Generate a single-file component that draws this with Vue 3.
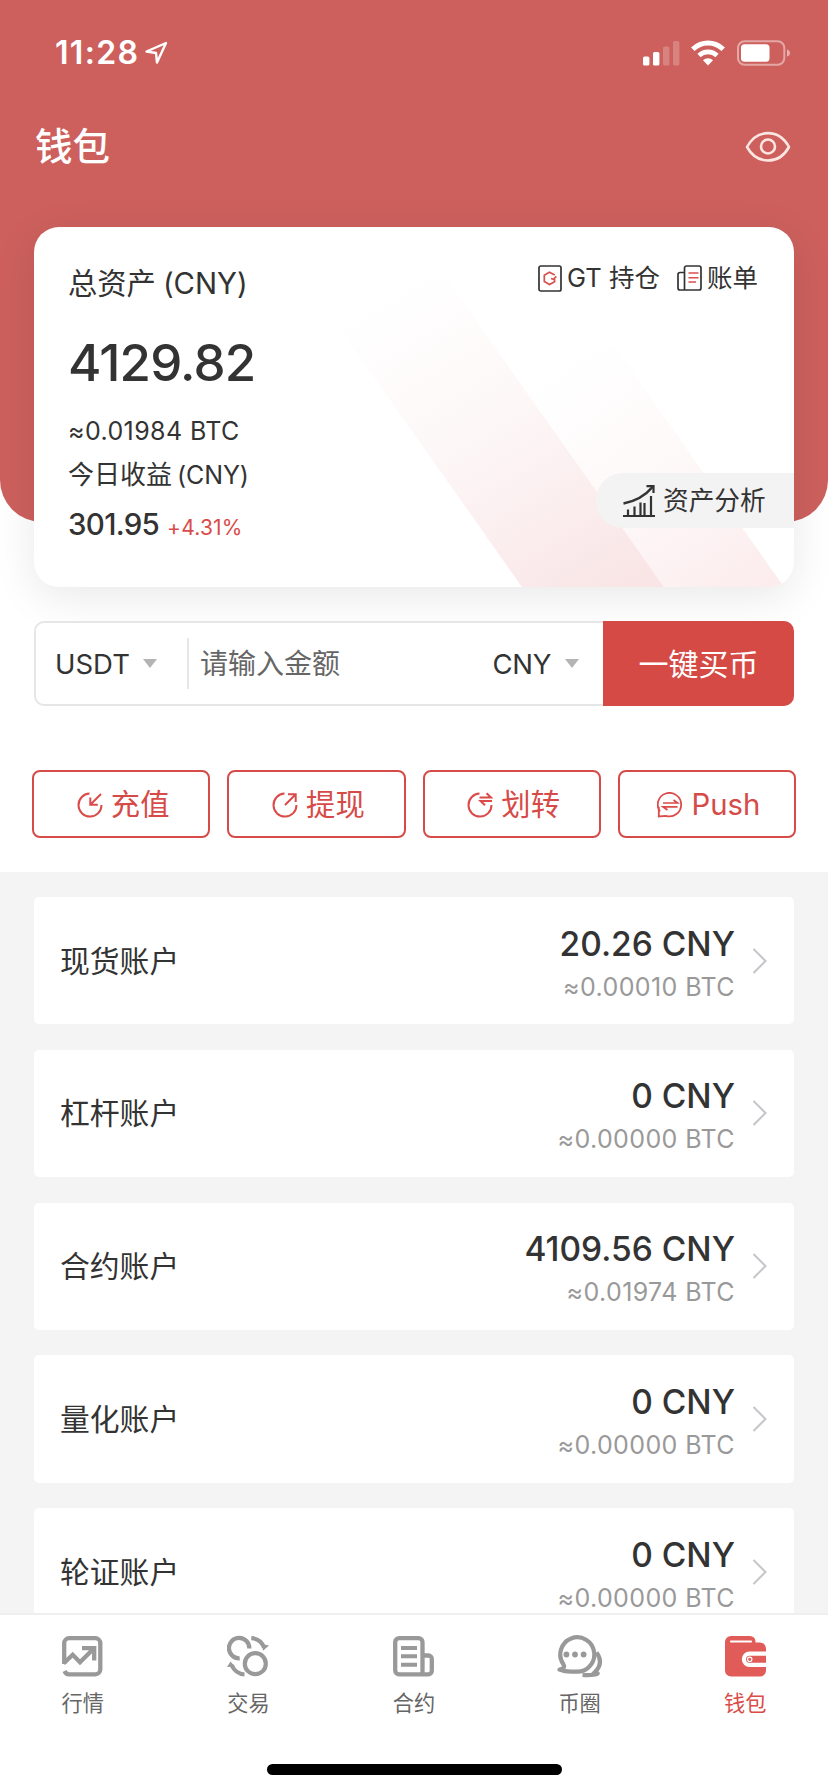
<script setup>
const actions = [
  { id: 'deposit', label: '充值' },
  { id: 'withdraw', label: '提现' },
  { id: 'transfer', label: '划转' },
  { id: 'push', label: 'Push' },
]

const accounts = [
  { name: '现货账户', cny: '20.26', btc: '0.00010' },
  { name: '杠杆账户', cny: '0', btc: '0.00000' },
  { name: '合约账户', cny: '4109.56', btc: '0.01974' },
  { name: '量化账户', cny: '0', btc: '0.00000' },
  { name: '轮证账户', cny: '0', btc: '0.00000' },
]

const tabs = [
  { id: 'market', label: '行情' },
  { id: 'trade', label: '交易' },
  { id: 'contract', label: '合约' },
  { id: 'circle', label: '币圈' },
  { id: 'wallet', label: '钱包', active: true },
]
</script>

<template>
  <div class="screen">
    <header class="hero">
      <div class="status">
        <div class="clock">
          <span class="time">11:28</span>
          <svg class="locate" width="25" height="25" viewBox="0 0 25 25" fill="none" stroke="#fff" stroke-width="2.4" stroke-linejoin="round">
            <path d="M22 3 2.500 11.500 12 13 13 22.500Z" />
          </svg>
        </div>
        <div class="indicators">
          <svg width="37" height="26" viewBox="0 0 37 26" fill="#fff">
            <rect x="0" y="16.500" width="6.400" height="9" rx="1.600" />
            <rect x="10" y="12" width="6.400" height="13.500" rx="1.600" />
            <rect x="20" y="6.500" width="6.400" height="19" rx="1.600" opacity=".22" />
            <rect x="30" y="1" width="6.400" height="24.500" rx="1.600" opacity=".22" />
          </svg>
          <svg class="wifi" width="34" height="26" viewBox="0 0 34 26" fill="none" stroke="#fff">
            <path d="M1.800 9.300A21.500 21.500 0 0 1 32.200 9.300" stroke-width="5" />
            <path d="M8 15.500A13 13 0 0 1 26 15.500" stroke-width="4.600" />
            <path d="M12 20.200a7.200 7.200 0 0 1 10 0L17 25.500Z" fill="#fff" stroke="none" />
          </svg>
          <svg class="battery" width="54" height="26" viewBox="0 0 54 26">
            <rect x="1" y="1.300" width="46.300" height="23.400" rx="6.500" fill="none" stroke="#fff" stroke-opacity=".45" stroke-width="2" />
            <rect x="4" y="4.300" width="28.500" height="17.400" rx="3.500" fill="#fff" />
            <path d="M50 9.500c4 1 4 6 0 7Z" fill="#fff" opacity=".5" />
          </svg>
        </div>
      </div>
      <div class="titlebar">
        <h1>钱包</h1>
        <svg width="46" height="32" viewBox="0 0 46 32" fill="none" stroke="#fbe6e2" stroke-width="2.600">
          <path d="M2 16C12-2.500 34-2.500 44 16C34 34 12 34 2 16Z" stroke-linejoin="round" />
          <circle cx="23" cy="15.500" r="7" />
        </svg>
      </div>
    </header>

    <section class="asset">
      <svg class="ribbons" width="760" height="360" viewBox="0 0 760 360">
        <defs>
          <linearGradient id="ribbonMain" gradientUnits="userSpaceOnUse" x1="370" y1="60" x2="560" y2="375">
            <stop offset="0" stop-color="#f9e5e6" stop-opacity="0" />
            <stop offset=".45" stop-color="#f9e5e6" stop-opacity=".32" />
            <stop offset="1" stop-color="#f9e5e6" />
          </linearGradient>
          <linearGradient id="ribbonSide" gradientUnits="userSpaceOnUse" x1="540" y1="130" x2="710" y2="375">
            <stop offset="0" stop-color="#fceced" stop-opacity="0" />
            <stop offset=".5" stop-color="#fceced" stop-opacity=".35" />
            <stop offset="1" stop-color="#fceced" />
          </linearGradient>
        </defs>
        <path d="M488 360 234 0H376L630 360Z" fill="url(#ribbonMain)" />
        <path d="M630 360 461 120H581L750 360Z" fill="url(#ribbonSide)" />
      </svg>
      <div class="summary">
        <p class="label">总资产<span class="unit">(CNY)</span></p>
        <p class="total">4129.82</p>
        <p class="btc">≈0.01984 BTC</p>
        <p class="today">今日收益<span class="unit">(CNY)</span></p>
        <p class="gain"><span class="gain-value">301.95</span><span class="gain-rate">+4.31%</span></p>
      </div>
      <nav class="links">
        <a class="link">
          <svg width="24" height="27" viewBox="0 0 24 27" fill="none">
            <rect x="1" y="1" width="22" height="25" rx="1.800" stroke="#333" stroke-width="1.700" />
            <path d="M16.800 10 11.400 7.300 6.300 10.200v6.300l5.100 3 5.200-2.800v-2.500M13 13.500l2.500 .8 2.800-3" stroke="#d9504d" stroke-width="1.700" />
          </svg>
          <span class="gt">GT 持仓</span>
        </a>
        <a class="link">
          <svg width="25" height="26" viewBox="0 0 25 26" fill="none">
            <path d="M7.500 25V3a2 2 0 0 1 2-2H22a2 2 0 0 1 2 2V23a2 2 0 0 1-2 2H3a2 2 0 0 1-2-2V9.500a2 2 0 0 1 2-2H7.500" stroke="#333" stroke-width="1.700" />
            <path d="M11.500 8h10M11.500 12.700h10M11.500 17h7.500" stroke="#d9504d" stroke-width="1.600" />
          </svg>
          <span class="bill">账单</span>
        </a>
      </nav>
      <a class="analysis">
        <svg width="34" height="34" viewBox="0 0 34 34" fill="none" stroke="#333" stroke-width="2.200">
          <path d="M1 32H33M6 31.500V25.500M12.500 31.500V22.500M18.500 31.500V18.500M22.500 31.500V19M29 31.500V12" />
          <path d="M1.500 19.500C14 17 23 12 30.500 3" stroke-width="2.600" />
          <path d="M24.500 2.200h7V9" />
        </svg>
        <span>资产分析</span>
      </a>
    </section>

    <section class="buy">
      <div class="coin"><span>USDT</span><i class="caret"></i></div>
      <div class="amount">请输入金额</div>
      <div class="fiat"><span>CNY</span><i class="caret"></i></div>
      <button class="submit">一键买币</button>
    </section>

    <section class="actions">
      <button v-for="a in actions" :key="a.id" class="action" :class="a.id">
        <svg width="26" height="26" viewBox="0 0 26 26" fill="none" stroke="#da4b49" stroke-width="2">
          <template v-if="a.id === 'deposit'">
            <path d="M12.500 1.600A11.500 11.500 0 1 0 24.500 13" />
            <path d="M24 2 13.500 12.500M13.300 5.500v7.300h7.500" />
          </template>
          <template v-else-if="a.id === 'withdraw'">
            <path d="M12.500 1.600A11.500 11.500 0 1 0 24.500 13" />
            <path d="M13 13 23.500 2.500M16 2.300h7.700V10" />
          </template>
          <template v-else-if="a.id === 'transfer'">
            <path d="M12.500 1.600A11.500 11.500 0 1 0 24.500 13" />
            <path d="M12.500 5.500H24L19.500 1.200M25 9H13.500L18 13.300" />
          </template>
          <template v-else>
            <path d="M3 19.500A11.700 11.700 0 1 1 9 23.800L1.800 24.500V15" stroke-width="1.800" />
            <path d="M6 11H20.500L16.500 8M20.500 14.800H6L10.500 18" stroke-width="1.700" />
          </template>
        </svg>
        <span>{{ a.label }}</span>
      </button>
    </section>

    <main class="accounts">
      <article v-for="acc in accounts" :key="acc.name" class="account">
        <span class="name">{{ acc.name }}</span>
        <div class="balance">
          <span class="cny">{{ acc.cny }} CNY</span>
          <span class="sub">≈{{ acc.btc }} BTC</span>
        </div>
        <svg width="16" height="26" viewBox="0 0 16 26" fill="none" stroke="#c6c6ca" stroke-width="2">
          <path d="M1.500 1 13.500 13 1.500 25" />
        </svg>
      </article>
    </main>

    <footer class="tabbar">
      <div class="tabs">
        <a v-for="t in tabs" :key="t.id" class="tab" :class="{ active: t.active }">
          <svg v-if="t.id === 'market'" width="41" height="43" viewBox="0 -1 41 43" fill="none" stroke="#999" stroke-width="4.300">
            <path d="M2.200 28V7.200a5 5 0 0 1 5-5H33.300a5 5 0 0 1 5 5V33.300a5 5 0 0 1-5 5H7Q4 38.300 2.500 35" />
            <path d="M1.500 27.500 10.700 18.800 18 26.200 32 12.200M20 12.200H32.200V24.500" />
          </svg>
          <svg v-else-if="t.id === 'trade'" width="42" height="43" viewBox="0 -1 42 43" fill="none" stroke="#999" stroke-width="4.200">
            <circle cx="28.300" cy="27.700" r="10.500" />
            <path d="M22.300 12.500A10.200 10.200 0 1 0 12.700 22.300" />
            <path d="M24.300 2.200C31 2.500 35 6 37 11.500M17.500 38.500C11 38 7 34.500 4.500 29" />
            <path d="M42 9.500 36 14.800 35 8ZM0 31 3.500 25.500 8 30.500Z" fill="#999" stroke="none" />
          </svg>
          <svg v-else-if="t.id === 'contract'" width="41" height="43" viewBox="0 -1 41 43" fill="none" stroke="#999" stroke-width="4.300">
            <path d="M29.500 38.300H6.200a4 4 0 0 1-4-4V6.200a4 4 0 0 1 4-4H25.500a4 4 0 0 1 4 4ZM29.500 19.500H35.500a3.300 3.300 0 0 1 3.300 3.300V35a3.300 3.300 0 0 1-3.300 3.300H29.500" />
            <path d="M8 12H24M8 20.300H24M8 28.700H24" stroke-width="4" />
          </svg>
          <svg v-else-if="t.id === 'circle'" width="48" height="43" viewBox="0 0 48 43" fill="none" stroke="#999" stroke-width="4.200">
            <path d="M3.500 34.500C7.500 34 9 32 7.500 29.500A17 17.200 0 1 1 19 36.500C13 37 8 36.500 3.500 34.500Z" stroke-linejoin="round" />
            <path d="M40.500 17.500C46 25 45 31 39 37C42 38 43 38.500 39 39.500Q34 40.500 26.500 40" />
            <g fill="#999" stroke="none"><circle cx="10.400" cy="19.500" r="2.900" /><circle cx="19" cy="19.500" r="2.900" /><circle cx="27.600" cy="19.500" r="2.900" /></g>
          </svg>
          <svg v-else width="41" height="43" viewBox="0 -1 41 43" fill="none">
            <path d="M6 0H25a5.500 5.500 0 0 1 5.500 5.500V6.500H35a6 6 0 0 1 6 6V34.500a6 6 0 0 1-6 6H6a6 6 0 0 1-6-6V6a6 6 0 0 1 6-6Z" fill="#e15b58" />
            <path d="M6 5.500H26" stroke="#fff" stroke-width="2.200" stroke-linecap="round" />
            <path d="M41 17.700H24.500a5.600 5.600 0 0 0 0 11.200H41" stroke="#fff" stroke-width="4.200" />
            <circle cx="24.700" cy="23.300" r="2.200" stroke="#fff" stroke-width="1.200" />
          </svg>
          <span>{{ t.label }}</span>
        </a>
      </div>
      <div class="home"></div>
    </footer>
  </div>
</template>

<style>
body { margin: 0; }
</style>

<style scoped>
* { box-sizing: border-box; }
.screen {
  width: 828px;
  height: 1792px;
  overflow: hidden;
  display: flex;
  flex-direction: column;
  background: #fff;
  color: #333;
  font-family: Inter, "Noto Sans CJK SC", sans-serif;
  font-weight: 400;
}
svg { display: block; flex: none; }
p, h1 { margin: 0; }
span { white-space: nowrap; }
button { font: inherit; padding: 0; }

.hero {
  height: 522px;
  flex: none;
  background: #cd605d;
  border-radius: 0 0 42px 42px;
}
.status {
  height: 105px;
  padding: 0 37px 0 55px;
  display: flex;
  justify-content: space-between;
  align-items: center;
}
.clock { display: flex; align-items: center; color: #fff; gap: 6px; }
.time { font-size: 32px; font-weight: 600; line-height: 40px; width: 83px; letter-spacing: 1.3px; }
.indicators { display: flex; align-items: center; }
.wifi { margin-left: 11px; }
.battery { margin-left: 12px; }
.titlebar {
  height: 84px;
  padding: 0 37px 0 35px;
  display: flex;
  justify-content: space-between;
  align-items: center;
}
h1 { font-size: 37.5px; font-weight: 500; line-height: 54px; color: #fff; }

.asset {
  position: relative;
  flex: none;
  margin: -295px 34px 0;
  height: 360px;
  border-radius: 25px;
  background: #fff;
  box-shadow: 0 10px 44px rgba(0, 0, 0, .09);
  display: flex;
  justify-content: space-between;
}
.ribbons { position: absolute; left: 0; top: 0; border-radius: 25px; }
.summary { position: relative; padding: 37px 0 0 34px; }
.unit { margin-left: 7px; }
.label { font-size: 29.3px; line-height: 40px; }
.total { font-size: 51px; font-weight: 500; line-height: 60px; margin-top: 29px; letter-spacing: -.85px; }
.btc { font-size: 25px; line-height: 36px; margin-top: 20px; letter-spacing: .4px; }
.today { font-size: 26px; line-height: 36px; margin-top: 8px; }
.today .unit { font-size: 25px; margin-left: 5px; letter-spacing: -.1px; }
.gain { display: flex; align-items: baseline; line-height: 40px; margin-top: 11px; }
.gain-value { font-size: 29.5px; font-weight: 500; letter-spacing: -.7px; }
.gain-rate { font-size: 21px; color: #da4b49; margin-left: 8px; letter-spacing: .2px; }
.links {
  position: relative;
  display: flex;
  gap: 17px;
  height: 40px;
  margin: 31px 36px 0 0;
}
.link { display: flex; align-items: center; gap: 5px; font-size: 25.5px; line-height: 40px; }
.analysis {
  position: absolute;
  right: 0;
  top: 246px;
  width: 198px;
  height: 55px;
  padding-left: 26px;
  display: flex;
  align-items: center;
  gap: 7px;
  border-radius: 27px 0 0 27px;
  background: #f3f3f3;
  font-size: 25.7px;
  line-height: 40px;
}

.buy {
  position: relative;
  flex: none;
  margin: 34px 34px 0;
  height: 85px;
  display: flex;
  align-items: center;
  border: 2px solid #e6e6e6;
  border-right: 0;
  border-radius: 10px;
  background: #fff;
  font-size: 27.5px;
  line-height: 40px;
}
.coin {
  width: 153px;
  height: 51px;
  padding: 0 30px 0 19px;
  display: flex;
  align-items: center;
  justify-content: space-between;
  border-right: 2px solid #e6e6e6;
}
.amount { flex: 1; padding-left: 11px; color: #666; font-size: 28px; }
.fiat { display: flex; align-items: center; gap: 14px; margin-right: 24px; letter-spacing: -.3px; }
.caret { border: 7px solid transparent; border-top: 9px solid #b4b4b4; border-bottom: 0; }
.submit {
  width: 191px;
  height: 85px;
  margin: -2px 0;
  border: 0;
  border-radius: 0 10px 10px 0;
  background: #d64a45;
  color: #fff;
  font-size: 30px;
}

.actions {
  flex: none;
  margin: 64px 32px 0;
  height: 68px;
  display: grid;
  grid-template-columns: repeat(4, 1fr);
  gap: 17px;
}
.action {
  display: flex;
  align-items: center;
  justify-content: center;
  gap: 8px;
  padding: 1px 0 0 4px;
  border: 2px solid #d64a48;
  border-radius: 8px;
  background: #fff;
  color: #d64a48;
  font-size: 29.3px;
  line-height: 40px;
}

.accounts {
  flex: 1;
  min-height: 0;
  margin-top: 34px;
  padding: 25px 34px 0;
  overflow: hidden;
  display: flex;
  flex-direction: column;
  gap: 25.5px;
  background: #f4f4f4;
}
.account {
  flex: none;
  height: 127.25px;
  padding: 0 26px;
  display: flex;
  align-items: center;
  border-radius: 5px;
  background: #fff;
}
.name { flex: 1; font-size: 29.8px; line-height: 44px; }
.balance { display: flex; flex-direction: column; align-items: flex-end; margin-right: 17px; padding-top: 8px; }
.cny { font-size: 33.5px; font-weight: 500; line-height: 44px; }
.sub { font-size: 25px; line-height: 42px; color: #999; letter-spacing: .4px; }

.tabbar {
  flex: none;
  height: 179px;
  padding-top: 20px;
  border-top: 2px solid #efefef;
  background: #fff;
  display: flex;
  flex-direction: column;
  align-items: center;
}
.tabs { width: 828px; display: grid; grid-template-columns: repeat(5, 1fr); }
.tab {
  display: flex;
  flex-direction: column;
  align-items: center;
  gap: 9px;
  font-size: 21.2px;
  line-height: 32px;
  color: #666;
}
.active { color: #da4b49; }
.home { width: 295px; height: 11px; margin-top: 45px; border-radius: 6px; background: #000; }
</style>
